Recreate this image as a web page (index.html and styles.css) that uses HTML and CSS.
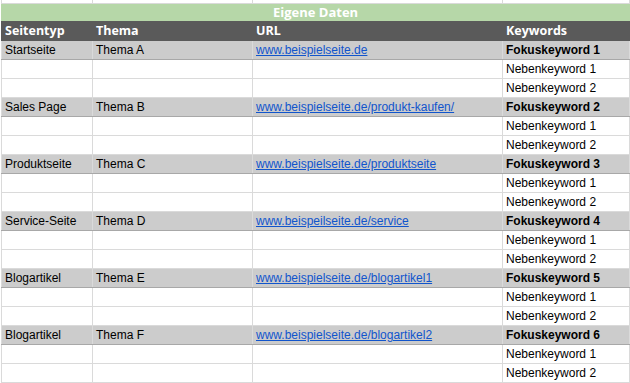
FILE: index.html
```html
<!DOCTYPE html>
<html lang="de">
<head>
<meta charset="utf-8">
<link rel="stylesheet" href="styles.css">
</head>
<body>
<table class="sheet">
  <colgroup>
    <col class="c1"><col class="c2"><col class="c3"><col class="c4">
  </colgroup>
  <tr class="strip"><td></td><td></td><td></td><td></td></tr>
  <tr class="band"><td colspan="4">Eigene Daten</td></tr>
  <tr class="head"><td>Seitentyp</td><td>Thema</td><td>URL</td><td>Keywords</td></tr>

  <tr class="main"><td>Startseite</td><td>Thema A</td><td><a href="#">www.beispielseite.de</a></td><td class="kw">Fokuskeyword 1</td></tr>
  <tr><td></td><td></td><td></td><td>Nebenkeyword 1</td></tr>
  <tr><td></td><td></td><td></td><td>Nebenkeyword 2</td></tr>

  <tr class="main"><td>Sales Page</td><td>Thema B</td><td><a href="#">www.beispielseite.de/produkt-kaufen/</a></td><td class="kw">Fokuskeyword 2</td></tr>
  <tr><td></td><td></td><td></td><td>Nebenkeyword 1</td></tr>
  <tr><td></td><td></td><td></td><td>Nebenkeyword 2</td></tr>

  <tr class="main"><td>Produktseite</td><td>Thema C</td><td><a href="#">www.beispielseite.de/produktseite</a></td><td class="kw">Fokuskeyword 3</td></tr>
  <tr><td></td><td></td><td></td><td>Nebenkeyword 1</td></tr>
  <tr><td></td><td></td><td></td><td>Nebenkeyword 2</td></tr>

  <tr class="main"><td>Service-Seite</td><td>Thema D</td><td><a href="#">www.beispeilseite.de/service</a></td><td class="kw">Fokuskeyword 4</td></tr>
  <tr><td></td><td></td><td></td><td>Nebenkeyword 1</td></tr>
  <tr><td></td><td></td><td></td><td>Nebenkeyword 2</td></tr>

  <tr class="main"><td>Blogartikel</td><td>Thema E</td><td><a href="#">www.beispielseite.de/blogartikel1</a></td><td class="kw">Fokuskeyword 5</td></tr>
  <tr><td></td><td></td><td></td><td>Nebenkeyword 1</td></tr>
  <tr><td></td><td></td><td></td><td>Nebenkeyword 2</td></tr>

  <tr class="main"><td>Blogartikel</td><td>Thema F</td><td><a href="#">www.beispielseite.de/blogartikel2</a></td><td class="kw">Fokuskeyword 6</td></tr>
  <tr><td></td><td></td><td></td><td>Nebenkeyword 1</td></tr>
  <tr><td></td><td></td><td></td><td>Nebenkeyword 2</td></tr>
</table>
</body>
</html>
```

FILE: styles.css
```css
html, body {
  margin: 0;
  padding: 0;
  background: #ffffff;
}
body {
  padding-left: 1px;
}
.sheet {
  border-collapse: collapse;
  table-layout: fixed;
  width: 628px;
  font-family: "Liberation Sans", Arial, sans-serif;
  font-size: 12px;
  color: #000000;
}
.c1 { width: 91px; }
.c2 { width: 160px; }
.c3 { width: 250px; }
.c4 { width: 127px; }

.sheet td {
  border: 1px solid #dadada;
  padding: 1px 0 0 3px;
  height: 17px;
  line-height: 17px;
  white-space: nowrap;
  overflow: hidden;
  vertical-align: middle;
}
.strip td {
  height: 3px;
  padding: 0;
  line-height: 0;
  border-top: none;
}
.band td {
  height: 16px;
  line-height: 16px;
  padding: 0;
  background: #b6d7a8;
  border-color: #b6d7a8;
  color: #ffffff;
  font-family: "Open Sans", "Liberation Sans", sans-serif;
  font-weight: 700;
  font-size: 13px;
  text-align: center;
}
.head td {
  height: 19px;
  line-height: 19px;
  padding-top: 0;
  background: #5a5a5a;
  border-color: #5a5a5a;
  color: #ffffff;
  font-family: "Open Sans", "Liberation Sans", sans-serif;
  font-weight: 700;
  font-size: 12.5px;
}
.main td {
  background: #cccccc;
  border-top-color: #a8a8a8;
  border-bottom-color: #a8a8a8;
}
.main td.kw {
  font-weight: 700;
}
.sheet a {
  color: #1155cc;
  text-decoration: underline;
}
```
